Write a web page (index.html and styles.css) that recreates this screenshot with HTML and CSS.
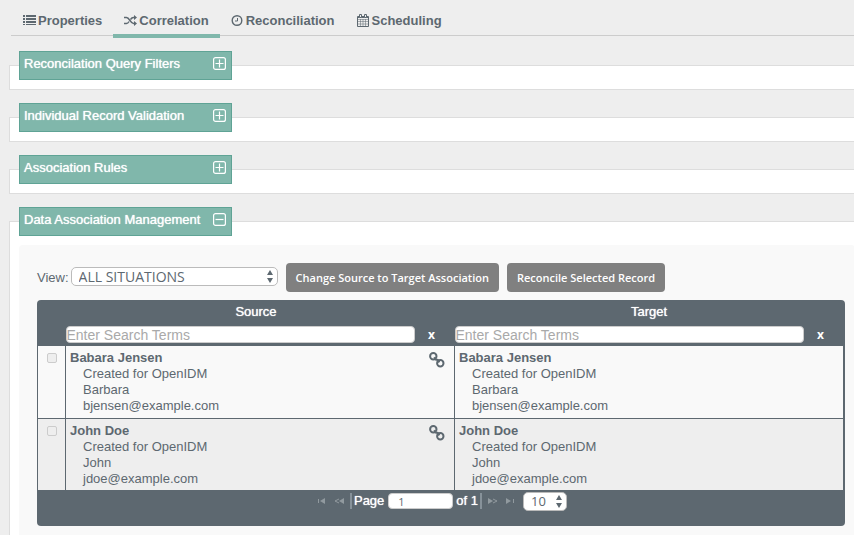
FILE: index.html
```html
<!DOCTYPE html>
<html lang="en">
<head>
<meta charset="utf-8">
<title>Correlation</title>
<link rel="stylesheet" href="styles.css">
</head>
<body>
<svg class="defs" aria-hidden="true">
  <symbol id="plus" viewBox="0 0 13 13"><rect x=".6" y=".6" width="11.8" height="11.8" rx="2"/><path d="M2.5 6.5h8M6.5 2.5v8"/></symbol>
  <symbol id="minus" viewBox="0 0 13 13"><rect x=".6" y=".6" width="11.8" height="11.8" rx="2"/><path d="M2.5 6.5h8"/></symbol>
  <symbol id="link" viewBox="0 0 16 16"><circle cx="4.300" cy="4.300" r="3.200"/><circle cx="11.300" cy="11.300" r="3.200"/><path d="M5.200 5.200l1.600 2.400 2 .4 1.600 2.400"/></symbol>
</svg>
<nav class="tabs">
  <a class="tab" href="#properties"><svg class="icon" viewBox="0 0 13 13"><path class="solid" d="M0 1h2v2H0zM3 1h10v2H3zM0 4h2v2H0zM3 4h10v2H3zM0 7h2v2H0zM3 7h10v2H3zM0 10h2v1H0zM3 10h10v1H3z"/></svg>Properties</a>
  <a class="tab active" href="#correlation"><svg class="icon" viewBox="0 0 13 13"><path d="M0 3.500h2.500c3 0 4 6 7 6H11M0 9.500h2.500c1.200 0 2-1 2.600-2M6.500 5.500c.7-1.100 1.600-2 3-2H11"/><path class="solid" d="M10 1l3 2.500-3 2.500zM10 7l3 2.500-3 2.500z"/></svg>Correlation</a>
  <a class="tab" href="#reconciliation"><svg class="icon" viewBox="0 0 13 13"><circle cx="6" cy="6.500" r="4.800"/><path class="thin" d="M6.500 4v3H4"/></svg>Reconciliation</a>
  <a class="tab" href="#scheduling"><svg class="icon" viewBox="0 0 13 13"><path class="thin" d="M.5 2.500h11v10H.5z"/><path class="faint" d="M1 5.500h10M1 7.500h10M1 10h10M3.500 5v7M6 5v7M8.500 5v7"/><path class="solid" d="M1 2h10v2H1z"/><path class="cut" d="M3.500 1v2.500M8.500 1v2.500"/><path class="thin" d="M2.500 3.500V.5h2v3zM7.500 3.500V.5h2v3z"/></svg>Scheduling</a>
</nav>
<main>
  <fieldset class="panel">
    <legend><button class="toggle" type="button">Reconcilation Query Filters<svg class="box"><use href="#plus"/></svg></button></legend>
  </fieldset>
  <fieldset class="panel">
    <legend><button class="toggle" type="button">Individual Record Validation<svg class="box"><use href="#plus"/></svg></button></legend>
  </fieldset>
  <fieldset class="panel">
    <legend><button class="toggle" type="button">Association Rules<svg class="box"><use href="#plus"/></svg></button></legend>
  </fieldset>
  <fieldset class="panel">
    <legend><button class="toggle" type="button">Data Association Management<svg class="box"><use href="#minus"/></svg></button></legend>
    <div class="content">
      <div class="toolbar">
        <label for="view">View:</label>
        <span class="select wide"><select id="view"><option>ALL SITUATIONS</option></select></span>
        <button class="action" type="button">Change Source to Target Association</button>
        <button class="action" type="button">Reconcile Selected Record</button>
      </div>
      <div class="grid">
        <table>
          <colgroup><col class="check-col"><col><col></colgroup>
          <thead>
            <tr><th></th><th scope="col" class="source">Source</th><th scope="col">Target</th></tr>
            <tr>
              <td></td>
              <td><div class="search"><input type="text" placeholder="Enter Search Terms" aria-label="Search source"><button type="button">x</button></div></td>
              <td><div class="search"><input type="text" placeholder="Enter Search Terms" aria-label="Search target"><button type="button">x</button></div></td>
            </tr>
          </thead>
          <tbody>
            <tr>
              <td class="pick"><input type="checkbox" aria-label="Select Babara Jensen"></td>
              <td><div class="record"><dl><dt>Babara Jensen</dt><dd>Created for OpenIDM</dd><dd>Barbara</dd><dd>bjensen@example.com</dd></dl><svg class="chain"><use href="#link"/></svg></div></td>
              <td><div class="record"><dl><dt>Babara Jensen</dt><dd>Created for OpenIDM</dd><dd>Barbara</dd><dd>bjensen@example.com</dd></dl></div></td>
            </tr>
            <tr>
              <td class="pick"><input type="checkbox" aria-label="Select John Doe"></td>
              <td><div class="record"><dl><dt>John Doe</dt><dd>Created for OpenIDM</dd><dd>John</dd><dd>jdoe@example.com</dd></dl><svg class="chain"><use href="#link"/></svg></div></td>
              <td><div class="record"><dl><dt>John Doe</dt><dd>Created for OpenIDM</dd><dd>John</dd><dd>jdoe@example.com</dd></dl></div></td>
            </tr>
          </tbody>
        </table>
        <div class="pager">
          <button class="step" type="button" aria-label="First page"><svg viewBox="0 0 10 6"><path d="M1.500 1v4"/><path class="solid" d="M8 0v6L3 3z"/></svg></button>
          <button class="step" type="button" aria-label="Previous page"><svg viewBox="0 0 10 6"><path d="M5 1L1 3l4 2"/><path class="solid" d="M10 0v6L5 3z"/></svg></button>
          <span class="bar"></span>
          <label for="page">Page</label>
          <input id="page" type="text" value="1">
          <span>of 1</span>
          <span class="bar"></span>
          <button class="step" type="button" aria-label="Next page"><svg viewBox="0 0 10 6"><path class="solid" d="M0 0v6l5-3z"/><path d="M5 1l4 2-4 2"/></svg></button>
          <button class="step" type="button" aria-label="Last page"><svg viewBox="0 0 10 6"><path d="M8.500 1v4"/><path class="solid" d="M1 0v6l5-3z"/></svg></button>
          <span class="select small"><select aria-label="Rows per page"><option>10</option></select></span>
        </div>
      </div>
    </div>
  </fieldset>
</main>
</body>
</html>
```
FILE: styles.css
```css
* { box-sizing: border-box; }
body {
  margin: 0;
  overflow-x: hidden;
  background: #eee;
  color: #5d6870;
  font: 13px/16px "Liberation Sans", Arial, sans-serif;
  scrollbar-width: none;
}
button, input, select { font: inherit; color: inherit; }
.defs { position: absolute; width: 0; height: 0; }
svg { fill: none; stroke: currentColor; stroke-width: 1.4; flex: none; }
svg .solid { fill: currentColor; stroke: none; }
svg .thin { stroke-width: 1; }
svg .faint { stroke-width: 1; opacity: .5; }
svg .cut { stroke: #eee; stroke-width: 3; }

.tabs {
  display: flex;
  height: 36px;
  margin-left: 11px;
  padding-left: 1px;
  border-bottom: 1px solid #ccc;
}
.tab {
  display: flex;
  align-items: center;
  gap: 2px;
  height: 38px;
  padding: 7px 11px 0;
  border-bottom: 4px solid transparent;
  color: inherit;
  font-weight: bold;
  text-decoration: none;
}
.tab.active { border-color: #80b7ab; }
.icon { width: 13px; height: 13px; }

main { padding: 15px 0 0 9px; }
.panel {
  min-width: 0;
  margin: 0 -2px 13px 0;
  padding: 0 0 9px 9px;
  border: 1px solid #ddd;
  background: #fff;
}
.panel:last-child { margin-bottom: 0; }
legend { padding: 0; }
.toggle {
  display: flex;
  align-items: center;
  justify-content: space-between;
  width: 213px;
  height: 29px;
  padding: 0 5px 4px 4px;
  border: 1px solid #5fa395;
  background: #80b7ab;
  color: #fff;
  text-shadow: 0 0 1px #fff;
}
.box { width: 13px; height: 13px; stroke-width: 1.2; }

.content {
  margin-top: 9px;
  padding: 18px 10px 12px 18px;
  border-radius: 4px;
  background: #f9f9f9;
}
.toolbar { display: flex; align-items: center; }
.select { position: relative; display: block; }
.select::before, .select::after {
  content: "";
  position: absolute;
  right: 5px;
  border: 3px solid transparent;
  pointer-events: none;
}
.select::before { top: 3px; border-bottom: 5px solid #5d6870; border-top: 0; }
.select::after { bottom: 3px; border-top: 5px solid #5d6870; border-bottom: 0; }
select {
  display: block;
  width: 100%;
  height: 19px;
  padding: 0 7px;
  appearance: none;
  border: 1px solid #bbb;
  border-radius: 5px;
  background: #fff;
  font: 14px/16px "Open Sans", sans-serif;
}
.wide { width: 207px; margin: 0 8px 2px 2px; }
.small { width: 44px; margin-left: 5px; }
.action {
  height: 29px;
  margin-right: 8px;
  padding: 0 10px;
  border: 0;
  border-radius: 4px;
  background: #808080;
  color: #fff;
  font: 600 11px/16px "Open Sans", sans-serif;
}

.grid {
  margin-top: 8px;
  padding-right: 1px;
  border-radius: 4px;
  background: #5d6870;
}
table { width: 100%; table-layout: fixed; border-collapse: collapse; }
.check-col { width: 28px; }
th, td { padding: 0; }
th { height: 24px; color: #fff; font-weight: normal; text-shadow: 0 0 1px #fff; }
.source { padding-right: 8px; }
thead td { height: 22px; vertical-align: top; }
.search { display: flex; padding-top: 2px; }
.search input {
  flex: 1;
  min-width: 0;
  height: 17px;
  padding: 0;
  border: 1px solid #ccc;
  border-radius: 4px;
  font-size: 14px;
}
::placeholder { color: #a9a9a9; opacity: 1; }
.search button {
  width: 40px;
  padding: 0 6px 0 0;
  border: 0;
  background: none;
  color: #fff;
  font: bold 12px/17px "Open Sans", sans-serif;
}
tbody td {
  height: 72px;
  vertical-align: top;
  border: 1px solid #5d6870;
  border-top: 0;
  background: #f9f9f9;
}
tbody tr:nth-child(2) td { background: #eee; }
.pick { text-align: center; }
.pick input {
  display: block;
  width: 10px;
  height: 10px;
  margin: 7px auto 0;
  appearance: none;
  border: 1px solid #ccc;
  border-radius: 2px;
  background: #eee;
}
.record { display: flex; justify-content: space-between; padding: 4px 9px 0 4px; }
dl, dt, dd { margin: 0; }
dt { font-weight: bold; }
dd { padding-left: 13px; }
.chain { width: 16px; height: 16px; margin-top: 2px; stroke-width: 2; }

.pager {
  display: flex;
  align-items: center;
  justify-content: center;
  height: 35px;
  padding-bottom: 14px;
  color: #fff;
  text-shadow: 0 0 1px #fff;
}
.step { width: 17px; height: 12px; padding: 0; border: 0; background: none; color: #919a9f; line-height: 0; }
.step svg { width: 10px; height: 6px; stroke-width: 1; }
.bar { width: 2px; height: 16px; margin: 0 2px; background: #87929a; }
#page {
  width: 65px;
  height: 16px;
  margin: 0 3px 0 4px;
  padding: 0 9px;
  border: 1px solid #ccc;
  border-radius: 4px;
  color: #5d6870;
  font: 11px/14px "Open Sans", sans-serif;
  text-shadow: none;
}
.small select { color: #5d6870; font-size: 13px; text-shadow: none; }
```
